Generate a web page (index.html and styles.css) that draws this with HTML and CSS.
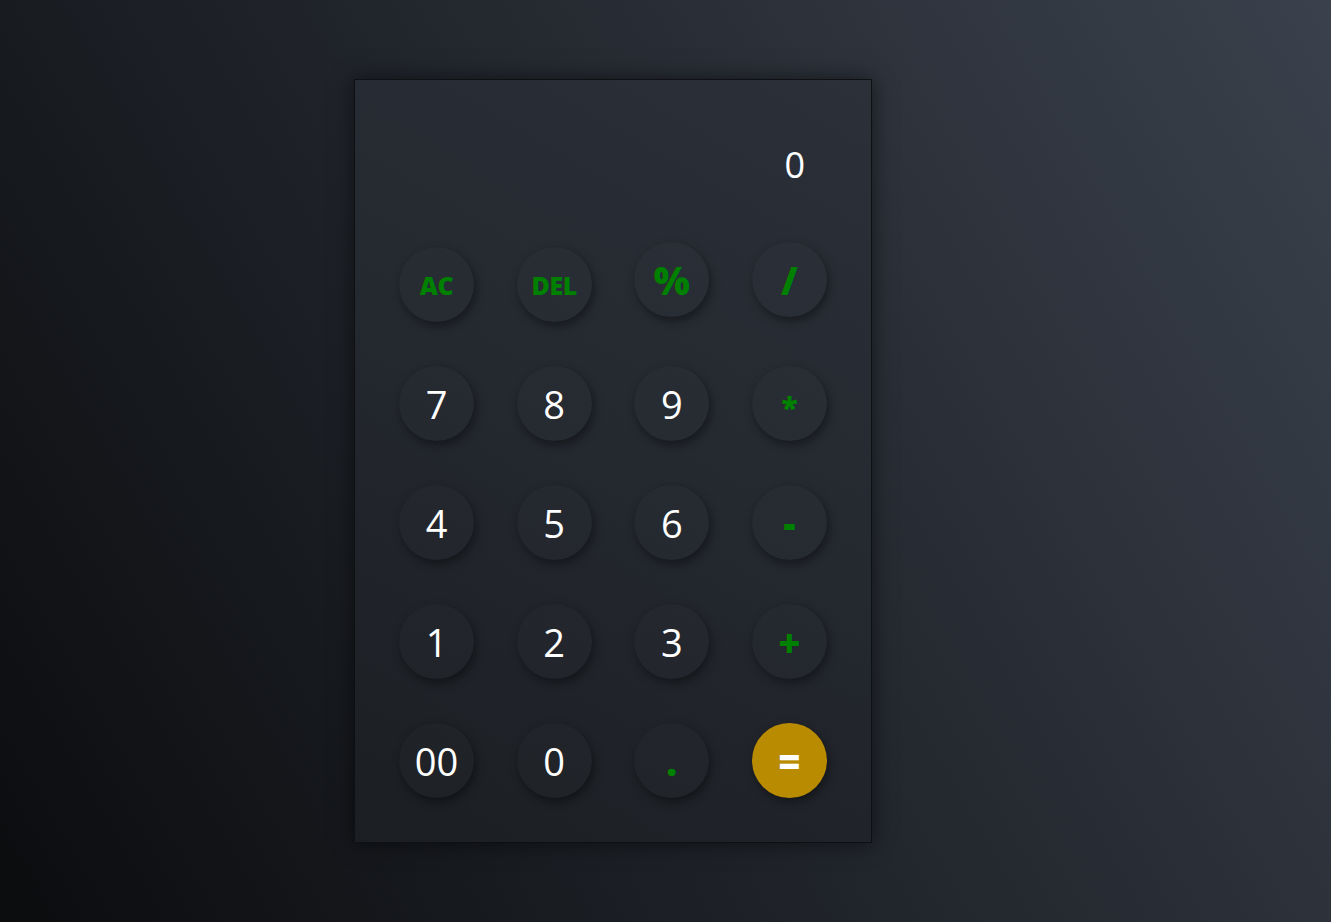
FILE: index.html
```html
<!DOCTYPE html>
<html lang="en">
<head>
<meta charset="utf-8">
<title>Calculator</title>
<link rel="stylesheet" href="styles.css">
</head>
<body>
<main class="page">
  <section class="calc">
    <div class="display"><span class="display-value">0</span></div>
    <div class="keys">
      <div class="row">
        <button class="key op small">AC</button>
        <button class="key op small">DEL</button>
        <button class="key op">%</button>
        <button class="key op">/</button>
      </div>
      <div class="row">
        <button class="key">7</button>
        <button class="key">8</button>
        <button class="key">9</button>
        <button class="key op"><span class="glyph-star">*</span></button>
      </div>
      <div class="row">
        <button class="key">4</button>
        <button class="key">5</button>
        <button class="key">6</button>
        <button class="key op">-</button>
      </div>
      <div class="row">
        <button class="key">1</button>
        <button class="key">2</button>
        <button class="key">3</button>
        <button class="key op">+</button>
      </div>
      <div class="row">
        <button class="key">00</button>
        <button class="key">0</button>
        <button class="key op">.</button>
        <button class="key equals">=</button>
      </div>
    </div>
  </section>
</main>
</body>
</html>
```

FILE: styles.css
```css
* { box-sizing: border-box; }

html, body {
  margin: 0;
  padding: 0;
  height: 100%;
}

body {
  background: linear-gradient(60deg, #0b0c0e 0%, #22262d 50%, #3a414c 100%);
  font-family: "Open Sans", "Noto Sans", sans-serif;
  overflow: hidden;
}

.page {
  height: 922px;
  display: flex;
  align-items: center;
  padding-left: 354px;
}

.calc {
  width: 518px;
  height: 764px;
  border: 1px solid #0e1013;
  background: linear-gradient(30deg, #1b1e22 0%, #24282f 50%, #2b3039 100%);
  box-shadow: 0 0 20px rgba(0, 0, 0, 0.55);
  padding: 44px;
  display: flex;
  flex-direction: column;
}

.display {
  height: 80px;
  margin-bottom: 38px;
  display: flex;
  align-items: center;
  justify-content: flex-end;
  padding-right: 22px;
}

.display-value {
  color: #ffffff;
  font-size: 36px;
}

.keys {
  display: flex;
  flex-direction: column;
  gap: 44px;
}

.row {
  display: flex;
  justify-content: space-between;
  align-items: baseline;
}

.key {
  width: 75px;
  height: 75px;
  border-radius: 50%;
  border: none;
  padding: 0;
  background: rgba(255, 255, 255, 0.012);
  box-shadow: 2px 4px 10px rgba(0, 0, 0, 0.42);
  color: #ffffff;
  font-family: "Open Sans", "Noto Sans", sans-serif;
  font-size: 38px;
  line-height: normal;
  cursor: pointer;
}

.key.op {
  color: #008000;
  font-weight: 800;
}

.key.small {
  font-size: 25px;
  letter-spacing: -0.5px;
}

.glyph-star {
  font-size: 30px;
}

.key.equals {
  background: #b98b00;
  color: #ffffff;
  font-weight: 800;
}
```
